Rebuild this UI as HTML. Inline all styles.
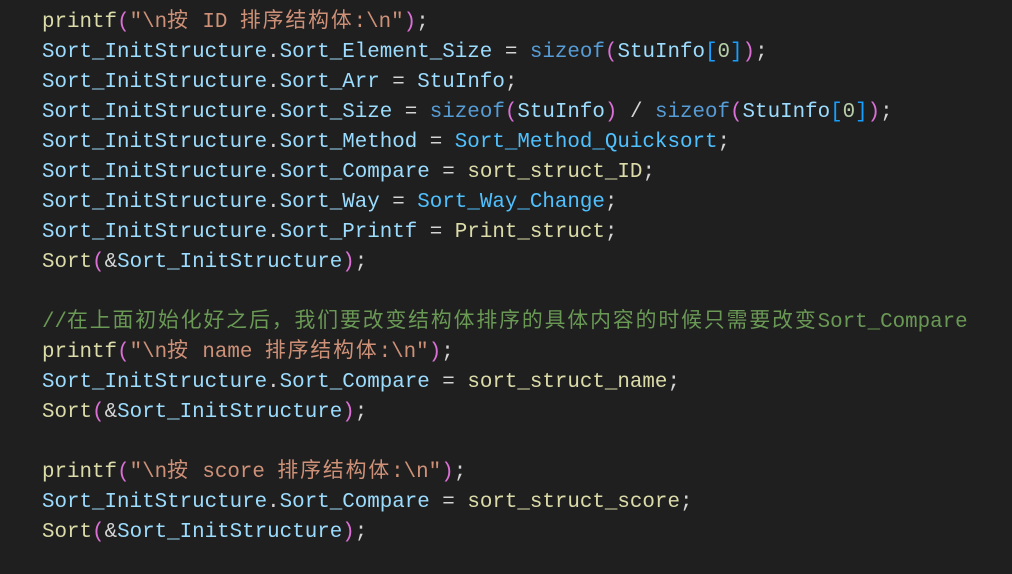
<!DOCTYPE html>
<html><head><meta charset="utf-8"><style>
html,body{margin:0;padding:0;background:#1f1f1f;width:1012px;height:574px;overflow:hidden}
pre{margin:0;padding:8px 0 0 42px;font-family:"Liberation Mono","Noto Sans CJK SC",monospace;font-size:20.85px;line-height:30px;color:#d4d4d4}
.v{color:#9cdcfe}.f{color:#dcdcaa}.s{color:#ce9178}.k{color:#569cd6}.e{color:#4fc1ff}.n{color:#b5cea8}
.p{color:#da70d6}.b{color:#179fff}.c{color:#6a9955}.z{letter-spacing:1.9px}
</style></head><body><pre><span class="f">printf</span><span class="p">(</span><span class="s">"\n<span class="z">按</span> ID <span class="z">排序结构体</span>:\n"</span><span class="p">)</span>;
<span class="v">Sort_InitStructure</span>.<span class="v">Sort_Element_Size</span> = <span class="k">sizeof</span><span class="p">(</span><span class="v">StuInfo</span><span class="b">[</span><span class="n">0</span><span class="b">]</span><span class="p">)</span>;
<span class="v">Sort_InitStructure</span>.<span class="v">Sort_Arr</span> = <span class="v">StuInfo</span>;
<span class="v">Sort_InitStructure</span>.<span class="v">Sort_Size</span> = <span class="k">sizeof</span><span class="p">(</span><span class="v">StuInfo</span><span class="p">)</span> / <span class="k">sizeof</span><span class="p">(</span><span class="v">StuInfo</span><span class="b">[</span><span class="n">0</span><span class="b">]</span><span class="p">)</span>;
<span class="v">Sort_InitStructure</span>.<span class="v">Sort_Method</span> = <span class="e">Sort_Method_Quicksort</span>;
<span class="v">Sort_InitStructure</span>.<span class="v">Sort_Compare</span> = <span class="f">sort_struct_ID</span>;
<span class="v">Sort_InitStructure</span>.<span class="v">Sort_Way</span> = <span class="e">Sort_Way_Change</span>;
<span class="v">Sort_InitStructure</span>.<span class="v">Sort_Printf</span> = <span class="f">Print_struct</span>;
<span class="f">Sort</span><span class="p">(</span>&amp;<span class="v">Sort_InitStructure</span><span class="p">)</span>;

<span class="c">//<span class="z">在上面初始化好之后，我们要改变结构体排序的具体内容的时候只需要改变</span>Sort_Compare</span>
<span class="f">printf</span><span class="p">(</span><span class="s">"\n<span class="z">按</span> name <span class="z">排序结构体</span>:\n"</span><span class="p">)</span>;
<span class="v">Sort_InitStructure</span>.<span class="v">Sort_Compare</span> = <span class="f">sort_struct_name</span>;
<span class="f">Sort</span><span class="p">(</span>&amp;<span class="v">Sort_InitStructure</span><span class="p">)</span>;

<span class="f">printf</span><span class="p">(</span><span class="s">"\n<span class="z">按</span> score <span class="z">排序结构体</span>:\n"</span><span class="p">)</span>;
<span class="v">Sort_InitStructure</span>.<span class="v">Sort_Compare</span> = <span class="f">sort_struct_score</span>;
<span class="f">Sort</span><span class="p">(</span>&amp;<span class="v">Sort_InitStructure</span><span class="p">)</span>;
</pre></body></html>
